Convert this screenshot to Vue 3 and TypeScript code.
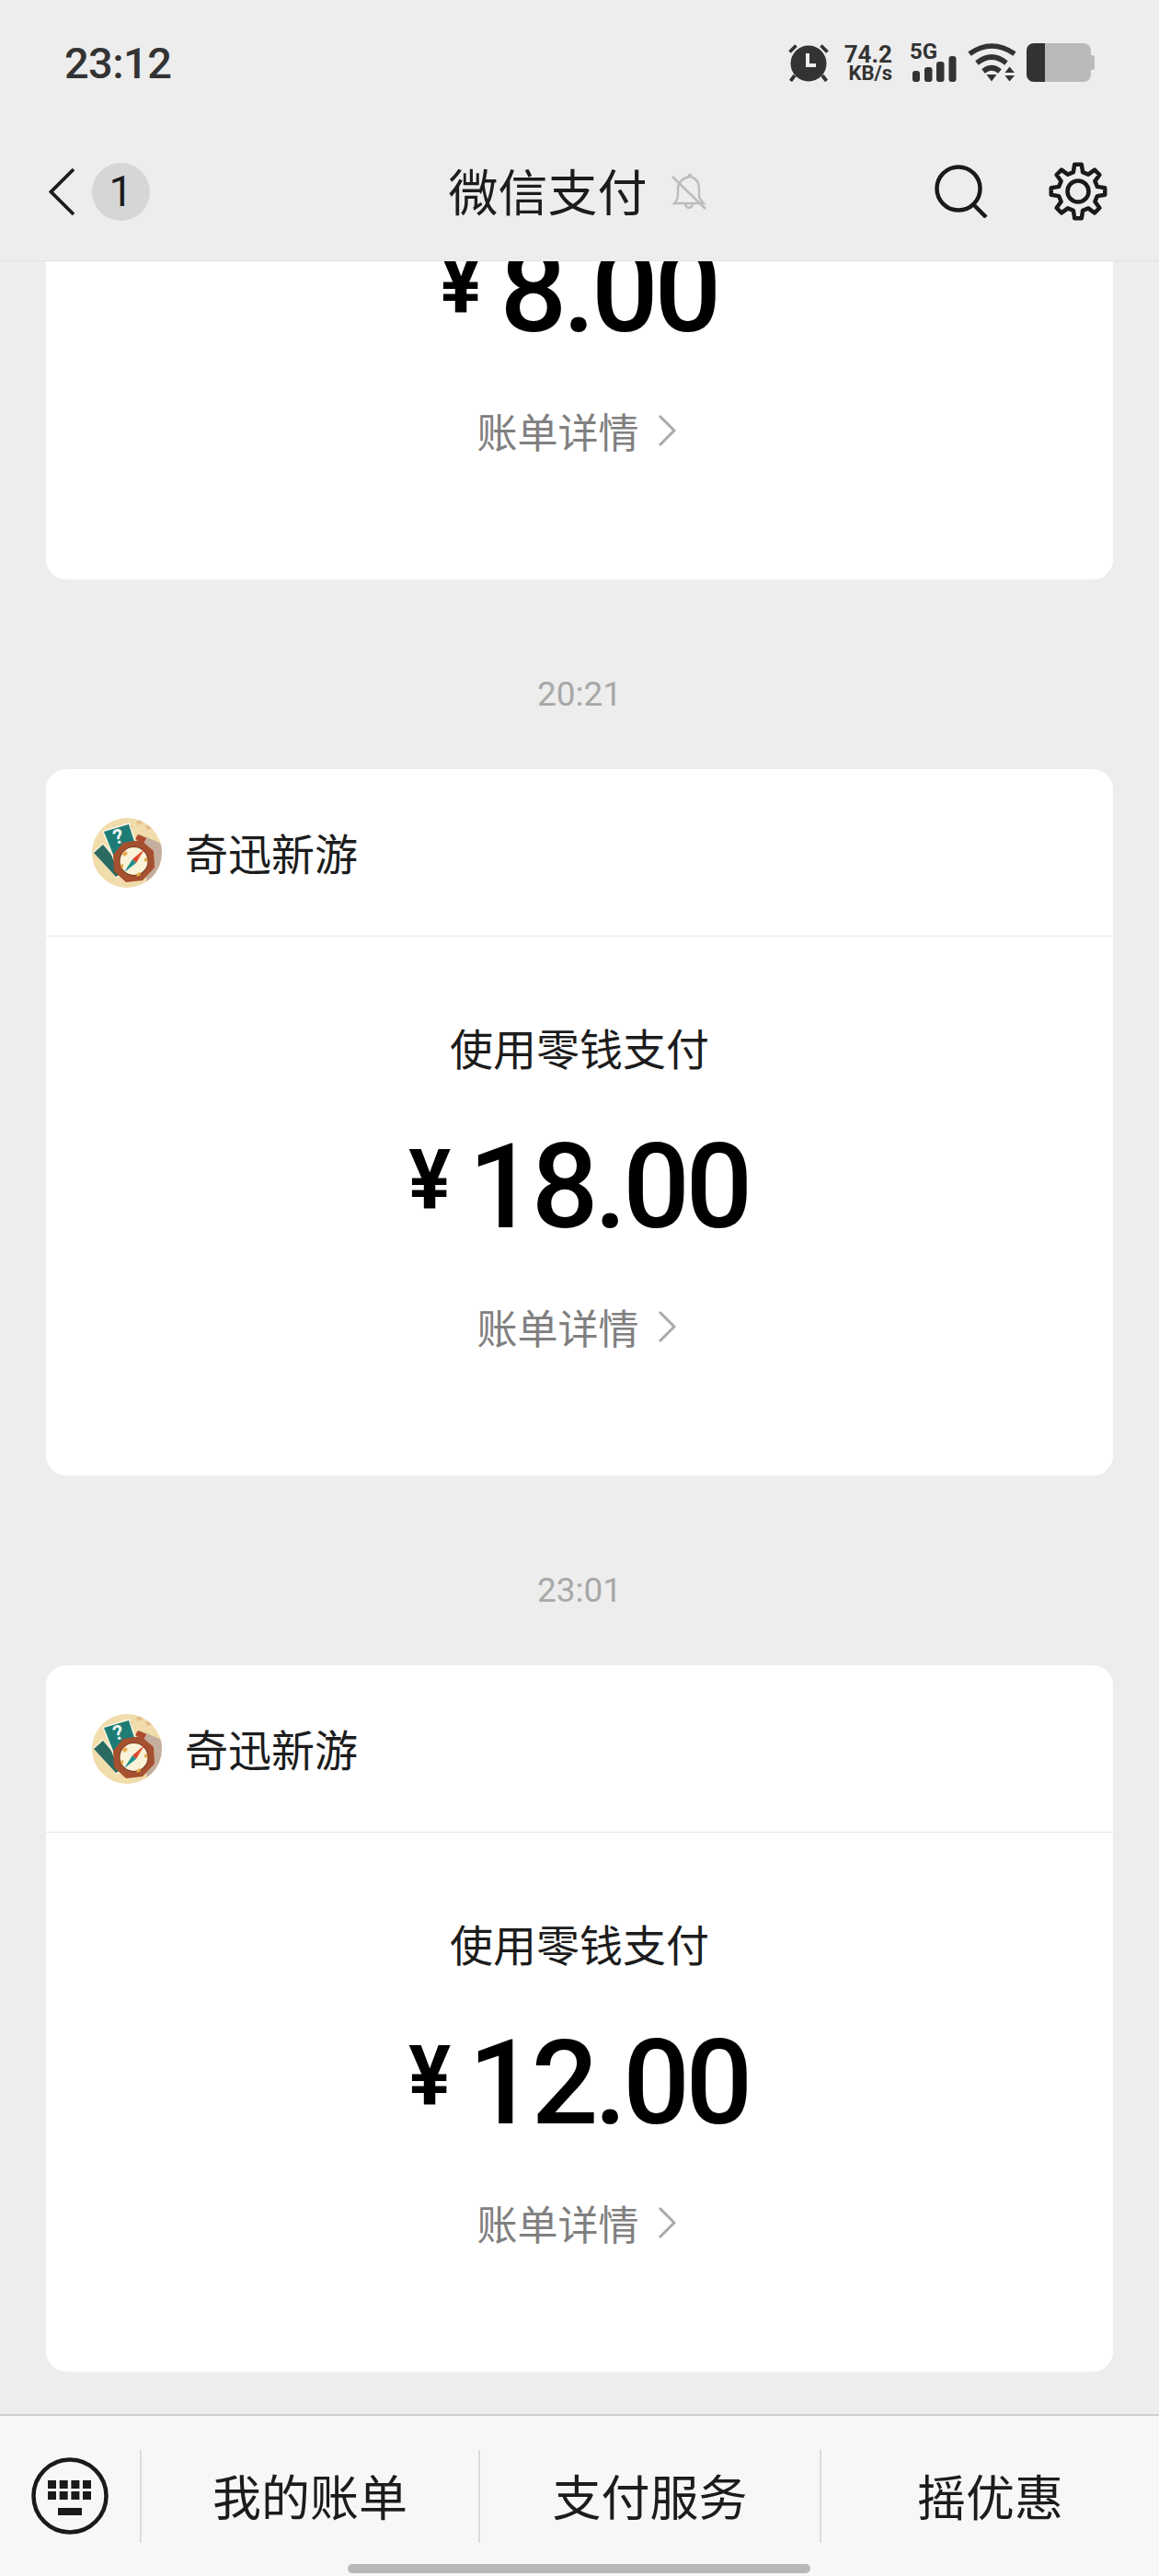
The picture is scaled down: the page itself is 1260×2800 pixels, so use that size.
<template>
  <div class="page">
    <header class="top">
      <div class="status">
        <span class="clock">23:12</span>
        <div class="status-right">
          <svg width="44" height="42" viewBox="0 0 44 42">
            <path d="M1.500 9.500 8.500 2.500M42.500 9.500 35.500 2.500M7 35 2.500 41M37 35 41.500 41" stroke="#333" stroke-width="3.800" fill="none" />
            <circle cx="22" cy="22" r="19.500" fill="#333" />
            <path d="M21 11v13h9" stroke="#ededed" stroke-width="4" fill="none" />
          </svg>
          <div class="speed">
            <span class="speed-num">74.2</span>
            <span class="speed-unit">KB/s</span>
          </div>
          <div class="signal">
            <span class="net">5G</span>
            <svg width="51" height="42" viewBox="0 0 51 42">
              <rect x="3" y="30" width="8" height="12" rx="3" fill="#333" />
              <rect x="16" y="26" width="8.500" height="16" rx="3" fill="#333" />
              <rect x="29" y="20" width="8.500" height="22" rx="3" fill="#333" />
              <rect x="42.500" y="14" width="8" height="28" rx="3" fill="#333" />
            </svg>
          </div>
          <svg width="53" height="42" viewBox="0 0 53 42">
            <path d="M2 11.500Q26-5.500 51 11.500M10 21.500Q26 8.500 42 21.500M17 30.500Q26 23 35 30.500" stroke="#333" stroke-width="5.600" fill="none" />
            <path d="M20.500 34H31.500L26 41.500ZM45.500 25.500 51 32H40.500ZM40.500 35H51L45.500 41.500Z" fill="#333" />
          </svg>
          <svg width="74" height="42" viewBox="0 0 74 42">
            <rect x="68" y="13" width="6" height="16" rx="2.500" fill="#bababa" />
            <rect width="70" height="42" rx="8" fill="#bababa" />
            <path d="M20 0H8a8 8 0 0 0-8 8v26a8 8 0 0 0 8 8h12Z" fill="#333" />
          </svg>
        </div>
      </div>
      <nav class="nav">
        <div class="nav-left">
          <svg width="29" height="53" viewBox="0 0 29 53">
            <path d="M27 2 2.500 26.500 27 51" stroke="#1c1c1c" stroke-width="3.800" fill="none" />
          </svg>
          <span class="badge">1</span>
        </div>
        <div class="nav-title">
          <span class="title">微信支付</span>
          <svg width="40" height="42" viewBox="0 0 40 42">
            <path d="M20 5c-1-3 3-3 2 0 6 2 9 6 9 13v7c0 3 2 6 5 9H4c3-3 4-6 4-9v-7c0-7 5-11 12-13ZM16 35c1 5 7 5 8 0" stroke="#bdbdbd" stroke-width="2.400" fill="none" />
            <path d="M2 5 38 40" stroke="#bdbdbd" stroke-width="2.800" fill="none" />
          </svg>
        </div>
        <div class="nav-right">
          <svg width="58" height="58" viewBox="0 0 58 58">
            <circle cx="26" cy="26" r="23.500" stroke="#1a1a1a" stroke-width="4.500" fill="none" />
            <path d="M42 43 56 57" stroke="#1a1a1a" stroke-width="4.500" fill="none" />
          </svg>
          <svg width="64" height="64" viewBox="0 0 64 64">
            <path :d="gear" stroke="#1a1a1a" stroke-width="4.500" stroke-linejoin="round" fill="none" />
            <circle cx="32" cy="32" r="11.500" stroke="#1a1a1a" stroke-width="4.500" fill="none" />
          </svg>
        </div>
      </nav>
    </header>

    <main class="list">
      <div class="list-inner">
        <template v-for="(item, i) in payments" :key="i">
          <div v-if="item.time" class="time">{{ item.time }}</div>
          <section class="card">
            <div class="card-head">
              <svg class="logo" width="76" height="76" viewBox="0 0 76 76">
                <defs>
                  <clipPath :id="`logo-${i}`"><circle cx="38" cy="38" r="38" /></clipPath>
                </defs>
                <g :clip-path="`url(#logo-${i})`">
                  <rect width="76" height="76" fill="#f1dcab" />
                  <path d="M52 18 76 28V62L60 72Z" fill="#c6ae9f" />
                  <path d="M48 4 54 1 56 5 50 8ZM58 9 64 7 66 11 60 13ZM38 9 44 8 44 11 39 12Z" fill="#e3bd8a" />
                  <path d="M1 37 12 27 38 58 27 66Z" fill="#f8f2df" />
                  <path d="M2 38 12 29 36 58 26 64Z" fill="#2b6a60" />
                  <path d="M11 14 41 5 49 29 24 48Z" fill="#f8f2df" />
                  <path d="M13 15 40 7 47 29 25 45Z" fill="#1d7d76" />
                  <text x="25" y="29" class="logo-mark" transform="rotate(-14 25 29)">?</text>
                  <path d="M47 23 50 18 59 22 56 28Z" fill="#b0492a" />
                  <path d="M34 27 53 24 67 36 68 54 55 68 37 70 24 58 23 40Z" fill="#a5502f" />
                  <circle cx="45.500" cy="47" r="16" fill="#7c3a24" />
                  <circle cx="45.500" cy="47" r="15" fill="#fbf2da" />
                  <path d="M33 39 37 36 39 39 35 42ZM48 61 52 59 53 62 49 64ZM57 44 60 43 60 48 57 47ZM31 51 34 50 34 54 32 55Z" fill="#e4ad4a" />
                  <path d="M57 34 48 49 44 45Z" fill="#d9432f" />
                  <path d="M57 34 50 43 48 49Z" fill="#e8763a" />
                  <path d="M35 59 44 45 48 49Z" fill="#1f8f8c" />
                </g>
              </svg>
              <span class="name">奇迅新游</span>
            </div>
            <div class="card-body">
              <div class="label">使用零钱支付</div>
              <div class="amount">
                <span class="yen">¥</span>
                <span class="num">{{ item.amount }}</span>
              </div>
              <div class="detail">
                <span>账单详情</span>
                <svg width="20" height="36" viewBox="0 0 20 36">
                  <path d="M2 2 18 18 2 34" stroke="#a9a9a9" stroke-width="3" fill="none" />
                </svg>
              </div>
            </div>
          </section>
        </template>
      </div>
    </main>

    <footer class="tabs">
      <div class="kb">
        <svg width="86" height="86" viewBox="0 0 86 86">
          <circle cx="43" cy="43" r="39.500" stroke="#1a1a1a" stroke-width="4.500" fill="none" />
          <rect v-for="k in keys" :key="k.id" :x="k.x" :y="k.y" width="9" height="9" fill="#1a1a1a" />
          <rect x="30" y="56" width="26" height="8" fill="#1a1a1a" />
        </svg>
      </div>
      <div v-for="t in tabs" :key="t" class="tab"><span>{{ t }}</span></div>
      <div class="home"></div>
    </footer>
  </div>
</template>

<script setup lang="ts">
const payments = [
  { time: "", amount: "8.00" },
  { time: "20:21", amount: "18.00" },
  { time: "23:01", amount: "12.00" },
];

const tabs = ["我的账单", "支付服务", "摇优惠"];

const keys = [26, 38].flatMap((y) =>
  [19, 31.7, 44.4, 57].map((x) => ({ id: `${x}-${y}`, x, y }))
);

// eight-toothed gear outline, tooth 0 pointing straight up
function gearPath(cx: number, cy: number, outer: number, inner: number) {
  const pts: string[] = [];
  for (let i = 0; i < 8; i++) {
    const a = (i * Math.PI) / 4 - Math.PI / 2;
    const at = (r: number, d: number) =>
      `${(cx + r * Math.cos(a + d)).toFixed(2)} ${(cy + r * Math.sin(a + d)).toFixed(2)}`;
    pts.push(at(inner, -0.24), at(outer, -0.13), at(outer, 0.13), at(inner, 0.24));
  }
  return `M${pts.join("L")}Z`;
}

const gear = gearPath(32, 32, 29.5, 21.5);
</script>

<style scoped>
.page { width:1260px;height:2800px;display:flex;flex-direction:column;overflow:hidden;background:#ededed;font-family:"Noto Sans CJK SC","Noto Sans",sans-serif;color:#1c1c1c; }
svg { display:block;flex:none; }

.top { flex:none;height:284px;background:#ededed;border-bottom:1px solid #e3e3e3;box-sizing:border-box; }
.status { height:136px;display:flex;align-items:center;justify-content:space-between;padding:0 70px; }
.clock { font:500 47px/1 Roboto,sans-serif;color:#333;letter-spacing:-.6px; }
.status-right { display:flex;align-items:center; }
.speed { display:flex;flex-direction:column;align-items:flex-end;width:54px;margin-left:15px;color:#333;font-family:Roboto,sans-serif;font-weight:700; }
.speed-num { font-size:26px;line-height:24px; }
.speed-unit { font-size:22px;line-height:20px;margin-top:-1px; }
.signal { position:relative;margin-left:19px; }
.net { position:absolute;left:0;top:-3px;font:700 24px/24px Roboto,sans-serif;color:#333; }
.status-right > svg:nth-child(4) { margin-left:12px; }
.status-right > svg:nth-child(5) { margin-left:11px; }

.nav { height:148px;display:grid;grid-template-columns:1fr auto 1fr;align-items:center;padding-bottom:4px;box-sizing:border-box; }
.nav-left { display:flex;align-items:center;gap:18px;padding-left:53px; }
.badge { width:63px;height:63px;border-radius:50%;background:#d6d6d6;display:flex;align-items:center;justify-content:center;font:400 46px/1 Roboto,sans-serif;color:#1c1c1c; }
.nav-title { display:flex;align-items:center;gap:25px;padding-right:4px; }
.title { font-size:54px;line-height:64px;margin-bottom:2px; }
.nav-right { display:flex;align-items:center;justify-content:flex-end;gap:66px;padding-right:56px; }

.list { flex:1;min-height:0;overflow:hidden; }
.list-inner { margin-top:-422px;padding:0 50px; }
.time { padding:100px 0 56px;text-align:center;font:400 37px/50px Roboto,sans-serif;color:#a8a8a8; }
.card { background:#fff;border-radius:22px;height:768px; }
.card-head { height:182px;box-sizing:border-box;display:flex;align-items:center;padding:0 50px;gap:25px;border-bottom:1px solid #e8e8e8; }
.logo-mark { font:700 22px Roboto,sans-serif;fill:#eef5f2; }
.name { font-size:47px;line-height:60px;color:#1c1c1c;margin-bottom:2px; }
.card-body { padding-top:90px;text-align:center; }
.label { font-size:47px;line-height:60px;color:#1c1c1c; }
.amount { display:flex;justify-content:center;margin-top:52px;height:140px;padding-right:3px;color:#000; }
.yen { font:700 90px/128px Roboto,sans-serif;margin-right:18px;transform:scaleX(.95); }
.num { font:500 128px/140px Roboto,sans-serif;letter-spacing:-4.4px; }
.detail { display:flex;justify-content:center;align-items:center;gap:20px;margin-top:52px;height:60px;padding-right:7px;font-size:44px;color:#808080; }

.tabs { position:relative;flex:none;height:176px;box-sizing:border-box;background:#f7f7f7;border-top:2px solid #d0d0d0;display:grid;grid-template-columns:152px 368px 371px 1fr;align-items:center; }
.kb { display:flex;justify-content:center;padding-right:1px; }
.tab { display:flex;align-items:center;justify-content:center;height:101px;border-left:2px solid #dcdcdc;font-size:53px;color:#1c1c1c; }
.tab span { margin-bottom:2px; }
.home { position:absolute;left:378px;bottom:3px;width:503px;height:10px;border-radius:5px;background:#b8b8b8; }
</style>
